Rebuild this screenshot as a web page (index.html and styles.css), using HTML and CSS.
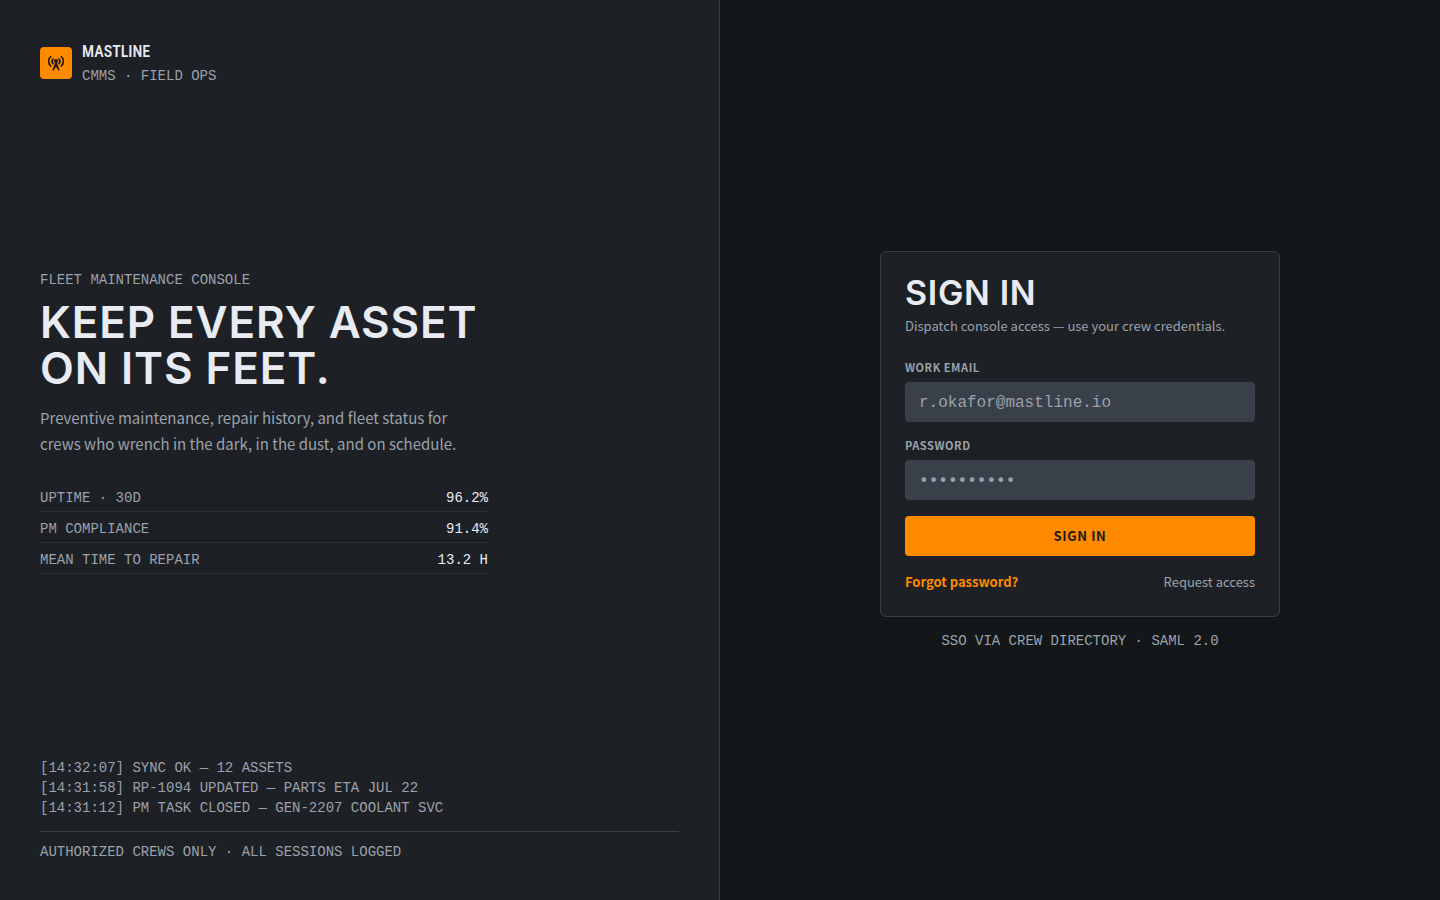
FILE: index.html
```
<!DOCTYPE html>
<html lang="en">
<head>
  <meta charset="UTF-8">
  <meta name="viewport" content="width=device-width, initial-scale=1">
  <title>Mastline - Sign in</title>
  <link rel="stylesheet" href="styles.css">
</head>
<body>
  <div class="layout">
    <section class="intro">
      <header class="brand">
        <div class="brand-mark">
          <svg width="16" height="16" viewBox="0 0 24 24" fill="none" stroke="currentColor" stroke-width="2.4" stroke-linecap="round" stroke-linejoin="round" aria-hidden="true">
            <path d="M4 16.500a9.500 9.500 0 0 1 0-14M20 2.500a9.500 9.500 0 0 1 0 14"/>
            <path d="M7.700 13a5 5 0 0 1 0-7M16.300 6a5 5 0 0 1 0 7"/>
            <circle cx="12" cy="9" r="1.800" fill="currentColor"/>
            <path d="M12 9v4M8 22l4-10 4 10M10 18h4"/>
          </svg>
        </div>
        <div>
          <div class="brand-name">MASTLINE</div>
          <div class="mono">CMMS · FIELD OPS</div>
        </div>
      </header>

      <div class="pitch">
        <div class="mono">FLEET MAINTENANCE CONSOLE</div>
        <h1>KEEP EVERY ASSET<br>ON ITS FEET.</h1>
        <p class="lead">Preventive maintenance, repair history, and fleet status for crews who wrench in the dark, in the dust, and on schedule.</p>
        <dl class="stats mono">
          <div class="stat"><dt>UPTIME · 30D</dt><dd>96.2%</dd></div>
          <div class="stat"><dt>PM COMPLIANCE</dt><dd>91.4%</dd></div>
          <div class="stat"><dt>MEAN TIME TO REPAIR</dt><dd>13.2 H</dd></div>
        </dl>
      </div>

      <footer class="mono">
        <ul class="log">
          <li>[14:32:07] SYNC OK — 12 ASSETS</li>
          <li>[14:31:58] RP-1094 UPDATED — PARTS ETA JUL 22</li>
          <li>[14:31:12] PM TASK CLOSED — GEN-2207 COOLANT SVC</li>
        </ul>
        <div class="notice">AUTHORIZED CREWS ONLY · ALL SESSIONS LOGGED</div>
      </footer>
    </section>

    <main class="access">
      <form class="card">
        <h2>SIGN IN</h2>
        <p class="hint">Dispatch console access — use your crew credentials.</p>

        <div class="field">
          <label for="email">WORK EMAIL</label>
          <input type="email" id="email" placeholder="r.okafor@mastline.io">
        </div>
        <div class="field">
          <label for="password">PASSWORD</label>
          <input type="password" id="password" placeholder="••••••••••">
        </div>

        <button type="submit">SIGN IN</button>

        <div class="links">
          <a class="forgot" href="#">Forgot password?</a>
          <a href="#">Request access</a>
        </div>
      </form>
      <div class="mono sso">SSO VIA CREW DIRECTORY · SAML 2.0</div>
    </main>
  </div>
</body>
</html>
```
FILE: styles.css
```
:root {
  --bg: #13171a;
  --panel: #1d2025;
  --field: #3a4049;
  --line: #3a3d44;
  --line-soft: #2d313a;
  --text: #e8ebf2;
  --muted: #9ba2ab;
  --accent: #ff8a00;
  --sans: "Noto Sans CJK JP", "Noto Sans", sans-serif;
  --mono: "Liberation Mono", monospace;
}
* {
  box-sizing: border-box;
}
body {
  margin: 0;
  background: var(--bg);
  color: var(--muted);
  font-family: var(--sans);
}
h1, h2, p, dl, dd, ul {
  margin: 0;
  padding: 0;
}
.layout {
  display: grid;
  grid-template-columns: 1fr 1fr;
  min-height: 100vh;
}
.mono {
  font-family: var(--mono);
  font-size: 14px;
  line-height: 20px;
}

/* left panel */
.intro {
  display: flex;
  flex-direction: column;
  justify-content: space-between;
  padding: 40px;
  background: var(--panel);
  border-right: 1px solid var(--line);
}
.brand {
  display: flex;
  align-items: center;
  gap: 10px;
}
.brand-mark {
  display: flex;
  align-items: center;
  justify-content: center;
  width: 32px;
  height: 32px;
  border-radius: 4px;
  background: var(--accent);
  color: #1d1a14;
}
.brand-name {
  margin-bottom: 2px;
  font-family: "Roboto Condensed", "DejaVu Sans Condensed", sans-serif;
  font-size: 16px;
  font-weight: 500;
  line-height: 24px;
  color: var(--text);
}
h1, h2 {
  font-family: Inter, sans-serif;
  font-weight: 600;
  letter-spacing: 0.02em;
  color: var(--text);
}
h1 {
  margin: 9px 0 14px;
  font-size: 44px;
  line-height: 46px;
}
.lead {
  max-width: 448px;
  font-size: 15px;
  line-height: 26px;
}
.stats {
  max-width: 448px;
  margin-top: 24px;
}
.stat {
  display: flex;
  justify-content: space-between;
  padding: 7px 0 3px;
  border-bottom: 1px solid var(--line-soft);
}
.stat dd {
  color: var(--text);
}
.log {
  padding-bottom: 13px;
  border-bottom: 1px solid var(--line);
  list-style: none;
}
.notice {
  padding-top: 12px;
  line-height: 16px;
}

/* sign-in side */
.access {
  display: flex;
  flex-direction: column;
  align-items: center;
  justify-content: center;
  gap: 16px;
  padding: 24px;
}
.card {
  width: 100%;
  max-width: 400px;
  padding: 24px;
  background: var(--panel);
  border: 1px solid var(--line);
  border-radius: 6px;
}
h2 {
  font-size: 34px;
  line-height: 34px;
}
.hint {
  margin: 6px 0 22px;
  font-size: 13px;
  line-height: 20px;
}
.field {
  margin-bottom: 14px;
}
label {
  display: block;
  margin-bottom: 6px;
  font-size: 11px;
  font-weight: 700;
  line-height: 18px;
  letter-spacing: 0.05em;
}
input {
  display: block;
  width: 100%;
  height: 40px;
  padding: 1px 14px 0;
  border: 0;
  border-radius: 4px;
  background: var(--field);
  color: var(--text);
  font-family: var(--mono);
  font-size: 16px;
}
input[type="password"] {
  font-family: "DejaVu Sans Mono", monospace;
}
input::placeholder {
  color: var(--muted);
  opacity: 1;
}
button {
  width: 100%;
  height: 40px;
  margin: 2px 0 16px;
  padding: 0 0 2px;
  border: 0;
  border-radius: 4px;
  background: var(--accent);
  color: #1d1a14;
  font-family: var(--sans);
  font-size: 13px;
  font-weight: 700;
  letter-spacing: 0.05em;
  cursor: pointer;
}
.links {
  display: flex;
  justify-content: space-between;
  font-size: 13px;
  line-height: 20px;
}
.links a {
  color: var(--muted);
  text-decoration: none;
}
.links .forgot {
  color: var(--accent);
  font-weight: 700;
}
.sso {
  line-height: 16px;
}
input:focus-visible, button:focus-visible, a:focus-visible {
  outline: 2px solid var(--accent);
  outline-offset: 2px;
}

@media (max-width: 800px) {
  .layout {
    grid-template-columns: 1fr;
  }
  .intro {
    gap: 40px;
    border-right: 0;
  }
}
```
